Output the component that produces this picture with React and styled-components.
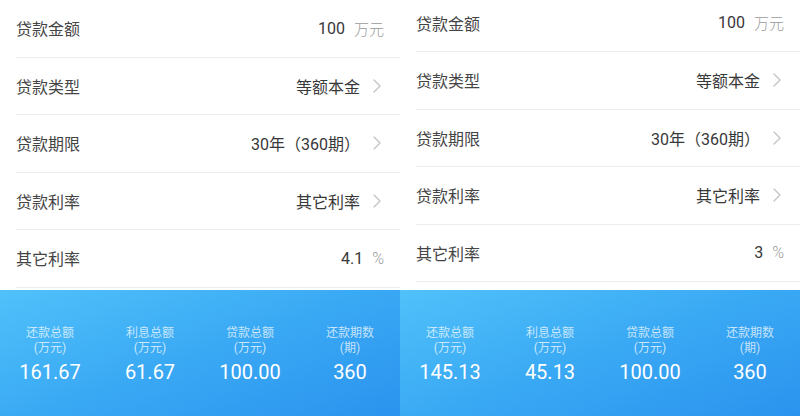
import React from 'react';
import styled, { createGlobalStyle } from 'styled-components';

const GlobalStyle = createGlobalStyle`
  html, body {
    margin: 0;
    padding: 0;
    background: #ffffff;
  }
  body {
    font-family: Roboto, "Noto Sans CJK SC", "Noto Sans", sans-serif;
  }
`;

const Screen = styled.div`
  display: grid;
  grid-template-columns: 400px 400px;
  width: 800px;
  height: 416px;
  overflow: hidden;
`;

const Panel = styled.div`
  display: flex;
  flex-direction: column;
  height: 416px;
  background: #ffffff;
`;

const ListViewport = styled.div`
  height: 290px;
  overflow: hidden;
  flex-shrink: 0;
`;

const List = styled.div`
  margin-top: ${p => -p.$scroll}px;
`;

const Row = styled.div`
  box-sizing: border-box;
  height: 57.5px;
  margin-left: 16px;
  padding-right: 16px;
  border-bottom: 1px solid #ececec;
  display: flex;
  align-items: center;
  justify-content: space-between;
`;

const Label = styled.span`
  font-size: 16px;
  color: #444444;
`;

const ValueGroup = styled.div`
  display: flex;
  align-items: center;
`;

const Value = styled.span`
  font-size: 16px;
  color: #383838;
`;

const Unit = styled.span`
  font-size: ${p => p.$size || 15}px;
  font-weight: 300;
  color: #9a9a9a;
  margin-left: 9px;
`;

const Chevron = styled.svg`
  width: 10px;
  height: 16px;
  margin-left: 12px;
  margin-right: 2px;
`;

const Summary = styled.div`
  flex: 1;
  background: linear-gradient(160deg, #50c1fa 0%, #3aa9f4 50%, #2a93ee 100%);
  display: grid;
  grid-template-columns: repeat(4, 1fr);
  align-content: start;
  padding-top: 36px;
`;

const Stat = styled.div`
  display: flex;
  flex-direction: column;
  align-items: center;
`;

const StatLabel = styled.span`
  font-size: 12px;
  line-height: 15px;
  color: rgba(255, 255, 255, 0.72);
`;

const StatValue = styled.span`
  font-size: 20px;
  line-height: 24px;
  margin-top: 4px;
  color: #ffffff;
`;

const Arrow = () => (
  <Chevron viewBox="0 0 10 16">
    <path d="M2 2 L8 8 L2 14" fill="none" stroke="#c8c8c8" strokeWidth="1.5" strokeLinecap="round" strokeLinejoin="round" />
  </Chevron>
);

const CalcPanel = ({ scroll, rate, stats }) => {
  const rows = [
    { label: '贷款金额', value: '100', unit: '万元' },
    { label: '贷款类型', value: '等额本金', arrow: true },
    { label: '贷款期限', value: '30年（360期）', arrow: true },
    { label: '贷款利率', value: '其它利率', arrow: true },
    { label: '其它利率', value: rate, unit: '%', unitSize: 16 },
  ];
  return (
    <Panel>
      <ListViewport>
        <List $scroll={scroll}>
          {rows.map(r => (
            <Row key={r.label}>
              <Label>{r.label}</Label>
              <ValueGroup>
                <Value>{r.value}</Value>
                {r.unit && <Unit $size={r.unitSize}>{r.unit}</Unit>}
                {r.arrow && <Arrow />}
              </ValueGroup>
            </Row>
          ))}
        </List>
      </ListViewport>
      <Summary>
        {stats.map(s => (
          <Stat key={s.title}>
            <StatLabel>{s.title}</StatLabel>
            <StatLabel>{s.unit}</StatLabel>
            <StatValue>{s.value}</StatValue>
          </Stat>
        ))}
      </Summary>
    </Panel>
  );
};

const makeStats = (total, interest) => [
  { title: '还款总额', unit: '(万元)', value: total },
  { title: '利息总额', unit: '(万元)', value: interest },
  { title: '贷款总额', unit: '(万元)', value: '100.00' },
  { title: '还款期数', unit: '(期)', value: '360' },
];

export default function App() {
  return (
    <>
      <GlobalStyle />
      <Screen>
        <CalcPanel scroll={0} rate="4.1" stats={makeStats('161.67', '61.67')} />
        <CalcPanel scroll={5.5} rate="3" stats={makeStats('145.13', '45.13')} />
      </Screen>
    </>
  );
}
